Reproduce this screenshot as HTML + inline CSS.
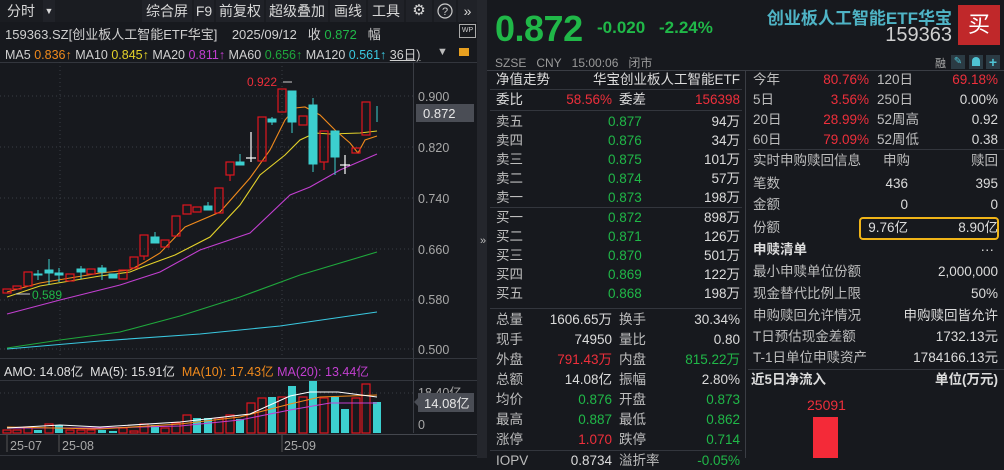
<!DOCTYPE html>
<html><head><meta charset="utf-8">
<style>
*{margin:0;padding:0;box-sizing:border-box}
body{width:1004px;height:458px;background:#17191e;overflow:hidden;position:relative;font-family:"Liberation Sans","Noto Sans CJK SC",sans-serif;color:#d6d6d6;font-size:13px}
.a{position:absolute;white-space:nowrap}
.r{color:#ee2f3b}.g{color:#20b848}.w{color:#dcdcdc}.lb{color:#bdbdbd}
.hl{position:absolute;height:1px;background:#33363d}
.row{position:absolute;height:19px;line-height:19px;font-size:13.5px}
.row span{position:absolute;white-space:nowrap}
.tb{position:absolute;top:0;height:22px;line-height:22px;font-size:14px;color:#d8d8d8;background:#202228;text-align:center}
</style></head><body>
<div class="a" style="left:0;top:0;width:477px;height:22px;background:#1a1c21"></div>
<div class="tb" style="left:0;width:42px;background:#1a1c21">分时</div>
<div class="tb" style="left:43px;width:12px;font-size:9px">▼</div>
<div class="tb" style="left:142px;width:50px">综合屏</div>
<div class="tb" style="left:194px;width:20px">F9</div>
<div class="tb" style="left:216px;width:48px">前复权</div>
<div class="tb" style="left:266px;width:62px">超级叠加</div>
<div class="tb" style="left:330px;width:36px">画线</div>
<div class="tb" style="left:368px;width:36px">工具</div>
<div class="tb" style="left:406px;width:26px;font-size:15px">⚙</div>
<div class="tb" style="left:434px;width:22px"><svg width="16" height="16" style="margin-top:3px"><circle cx="8" cy="8" r="7" fill="none" stroke="#ccc" stroke-width="1.2"/><text x="8" y="12" font-size="11" fill="#ccc" text-anchor="middle" font-family="Liberation Sans">?</text></svg></div>
<div class="tb" style="left:458px;width:19px">»</div>
<div class="a" style="left:5px;top:24px;font-size:13px;color:#d0d0d0">159363.SZ[创业板人工智能ETF华宝]&nbsp;&nbsp;&nbsp; 2025/09/12&nbsp;&nbsp; 收 <span class="g">0.872</span>&nbsp;&nbsp; 幅</div>
<div class="a" style="left:459px;top:24px;width:17px;height:14px;border:1px solid #aaa;font-size:7px;line-height:12px;text-align:center;color:#ccc">WP</div>
<div class="a" style="left:5px;top:44px;font-size:12.5px;color:#d0d0d0">MA5 <span style="color:#f08a1c">0.836↑</span> MA10 <span style="color:#e4d22a">0.845↑</span> MA20 <span style="color:#c23fd0">0.811↑</span> MA60 <span style="color:#1fa83c">0.656↑</span> MA120 <span style="color:#3ac8e0">0.561↑</span> <u>36日)</u></div>
<div class="a" style="left:437px;top:46px;color:#bbb;font-size:11px">▼</div>
<div class="a" style="left:459px;top:48px;width:10px;height:8px;background:#e8a020"></div>
<div class="hl" style="left:0;top:62px;width:477px"></div>
<svg class="a" style="left:0;top:0" width="477" height="458">
<g stroke="#3a3d44" stroke-dasharray="1,3" stroke-width="1">
<line x1="0" y1="96" x2="413" y2="96"/><line x1="0" y1="147" x2="413" y2="147"/><line x1="0" y1="198" x2="413" y2="198"/><line x1="0" y1="249" x2="413" y2="249"/><line x1="0" y1="300" x2="413" y2="300"/><line x1="0" y1="349" x2="413" y2="349"/>
<line x1="60" y1="62" x2="60" y2="356"/><line x1="282" y1="62" x2="282" y2="356"/>
<line x1="0" y1="393" x2="413" y2="393"/>
</g>
<line x1="413.5" y1="62" x2="413.5" y2="433" stroke="#3a3d44"/>
<line x1="0" y1="358.5" x2="477" y2="358.5" stroke="#33363d"/>
<line x1="0" y1="380.5" x2="477" y2="380.5" stroke="#33363d"/>
<line x1="0" y1="434.5" x2="477" y2="434.5" stroke="#44474e"/>
<line x1="0" y1="455.5" x2="477" y2="455.5" stroke="#33363d"/>
<g font-family="Liberation Sans" font-size="12.5" fill="#a8a8a8">
<text x="418" y="101">0.900</text><text x="418" y="152">0.820</text><text x="418" y="203">0.740</text><text x="418" y="254">0.660</text><text x="418" y="304">0.580</text><text x="418" y="354">0.500</text>
<text x="418" y="397">18.40亿</text><text x="418" y="429">0</text>
<text x="10" y="450">25-07</text><text x="62" y="450">25-08</text><text x="284" y="450">25-09</text>
</g>
<g stroke="#555" ><line x1="7" y1="435" x2="7" y2="452"/><line x1="59" y1="435" x2="59" y2="452"/><line x1="282" y1="435" x2="282" y2="452"/></g>
<rect x="416" y="104" width="58" height="18" fill="#4a4d55"/>
<text x="423" y="118" font-family="Liberation Sans" font-size="13" fill="#e8e8e8">0.872</text>
<rect x="418" y="393" width="56" height="19" fill="#4a4d55"/><polygon points="414,402 418,398 418,406" fill="#4a4d55"/>
<text x="424" y="408" font-family="Liberation Sans" font-size="13" fill="#e8e8e8">14.08亿</text>
<g fill="none" stroke-width="1.1">
<polyline stroke="#3ac8e0" points="7,349 100,341 200,334 280,326 377,312"/>
<polyline stroke="#1fa83c" points="7,348 60,340 120,332 180,316 240,297 300,275 377,252"/>
<polyline stroke="#c23fd0" points="7,314 60,300 120,285 160,272 200,250 250,233 290,195 310,187 340,170 377,154"/>
<polyline stroke="#e4d22a" points="7,297 40,286 100,276 130,272 145,266 175,255 210,237 240,205 260,175 285,155 300,140 315,133 330,134 360,133 377,131"/>
<polyline stroke="#f08a1c" points="7,292 40,283 100,273 130,270 145,262 160,253 185,227 220,212 250,178 270,150 285,120 295,108 305,107 320,115 335,130 350,143 358,153 365,140 377,136"/>
</g>
<g stroke="#e0161f" fill="none" stroke-width="1.2">
<rect x="3" y="289" width="8" height="4"/><rect x="13" y="286" width="8" height="3"/><rect x="24" y="272" width="8" height="14"/>
<rect x="66" y="274" width="8" height="7"/><rect x="87" y="269" width="8" height="5"/><rect x="119" y="270" width="8" height="9"/>
<rect x="130" y="257" width="8" height="11"/><rect x="140" y="235" width="8" height="21"/><rect x="161" y="240" width="8" height="7"/>
<rect x="172" y="216" width="8" height="20"/><rect x="183" y="205" width="8" height="9"/><rect x="193" y="207" width="8" height="5"/>
<rect x="215" y="188" width="8" height="25"/><rect x="226" y="162" width="8" height="13"/><rect x="258" y="117" width="8" height="44"/>
<rect x="278" y="89" width="8" height="23"/><rect x="299" y="116" width="8" height="9"/><rect x="320" y="131" width="8" height="31"/>
<rect x="352" y="148" width="8" height="5"/><rect x="362" y="102" width="8" height="33"/>
<line x1="230" y1="175" x2="230" y2="181"/><line x1="324" y1="162" x2="324" y2="170"/><line x1="144" y1="256" x2="144" y2="260"/>
</g>
<g fill="#3ccfcf" stroke="#3ccfcf" stroke-width="1">
<rect x="34" y="274" width="8" height="1"/><line x1="38" y1="270" x2="38" y2="280"/>
<rect x="45" y="270" width="8" height="3"/><line x1="49" y1="259" x2="49" y2="285"/>
<rect x="55" y="273" width="8" height="2"/><line x1="59" y1="268" x2="59" y2="282"/>
<rect x="77" y="269" width="8" height="3"/><line x1="81" y1="266" x2="81" y2="279"/>
<rect x="98" y="268" width="8" height="4"/><line x1="102" y1="265" x2="102" y2="280"/>
<rect x="109" y="274" width="8" height="4"/>
<rect x="151" y="237" width="8" height="6"/><line x1="155" y1="232" x2="155" y2="243"/>
<rect x="204" y="206" width="8" height="4"/><line x1="208" y1="202" x2="208" y2="210"/>
<rect x="236" y="162" width="8" height="3"/><line x1="240" y1="154" x2="240" y2="165"/>
<rect x="268" y="119" width="8" height="3"/><line x1="272" y1="117" x2="272" y2="125"/>
<rect x="288" y="91" width="8" height="31"/><line x1="292" y1="91" x2="292" y2="133"/>
<rect x="309" y="105" width="8" height="59"/><line x1="313" y1="98" x2="313" y2="172"/>
<rect x="331" y="131" width="8" height="26"/><line x1="335" y1="157" x2="335" y2="175"/>
<line x1="377" y1="106" x2="377" y2="122"/>
</g>
<g stroke="#fff" stroke-width="1.2"><line x1="251" y1="132" x2="251" y2="162"/><line x1="246" y1="158" x2="256" y2="158"/><line x1="345" y1="155" x2="345" y2="174"/><line x1="340" y1="165" x2="350" y2="165"/>
<line x1="283" y1="82" x2="292" y2="82" stroke="#ccc" stroke-width="1"/><line x1="16" y1="294" x2="30" y2="294" stroke="#ccc" stroke-width="1"/></g>
<text x="247" y="86" font-family="Liberation Sans" font-size="12" fill="#ee2f3b">0.922</text>
<text x="32" y="299" font-family="Liberation Sans" font-size="12" fill="#20b848">0.589</text>
<g stroke="#e0161f" fill="none" stroke-width="1.2">
<rect x="3" y="430" width="8" height="3"/><rect x="13" y="430" width="8" height="3"/><rect x="24" y="427" width="8" height="6"/>
<rect x="45" y="424" width="8" height="9"/><rect x="66" y="430" width="8" height="3"/><rect x="77" y="430" width="8" height="3"/><rect x="87" y="430" width="8" height="3"/>
<rect x="119" y="428" width="8" height="5"/><rect x="130" y="431" width="8" height="2"/><rect x="140" y="424" width="8" height="9"/><rect x="161" y="428" width="8" height="5"/>
<rect x="172" y="423" width="8" height="10"/><rect x="183" y="415" width="8" height="18"/><rect x="215" y="418" width="8" height="15"/><rect x="226" y="415" width="8" height="18"/>
<rect x="247" y="403" width="8" height="30"/><rect x="258" y="398" width="8" height="35"/><rect x="278" y="397" width="8" height="36"/>
<rect x="299" y="397" width="8" height="36"/><rect x="320" y="398" width="8" height="35"/><rect x="352" y="398" width="8" height="35"/><rect x="362" y="384" width="8" height="49"/>
</g>
<g fill="#3ccfcf">
<rect x="34" y="430" width="8" height="3"/><rect x="55" y="425" width="8" height="8"/><rect x="98" y="430" width="8" height="3"/><rect x="109" y="431" width="8" height="2"/>
<rect x="151" y="425" width="8" height="8"/><rect x="193" y="418" width="8" height="15"/><rect x="204" y="418" width="8" height="15"/><rect x="236" y="419" width="8" height="14"/>
<rect x="268" y="397" width="8" height="36"/><rect x="288" y="386" width="8" height="47"/><rect x="309" y="381" width="8" height="52"/><rect x="331" y="397" width="8" height="36"/>
<rect x="341" y="409" width="8" height="24"/><rect x="373" y="402" width="8" height="31"/>
</g>
<g fill="none" stroke-width="1.1">
<polyline stroke="#c23fd0" points="7,428 100,428 180,426 240,420 290,410 330,403 377,403"/>
<polyline stroke="#f08a1c" points="7,427 100,429 180,424 240,417 290,404 320,397 377,395"/>
<polyline stroke="#fff" points="7,428 60,425 100,427 180,422 250,414 290,396 310,392 338,392 377,397"/>
</g>
</svg>
<div class="a" style="left:4px;top:361px;font-size:12.5px;color:#e0e0e0">AMO: 14.08亿&nbsp; MA(5): 15.91亿&nbsp; <span style="color:#f08a1c">MA(10): 17.43亿</span> <span style="color:#c23fd0">MA(20): 13.44亿</span></div>
<div class="a" style="left:477px;top:0;width:10px;height:458px;background:#24262c"></div>
<div class="a" style="left:480px;top:235px;font-size:11px;color:#bbb">»</div>
<div class="a g" style="left:495px;top:8px;font-size:36px;font-weight:bold;letter-spacing:-0.5px">0.872</div>
<div class="a g" style="left:597px;top:18px;font-size:17px;font-weight:bold">-0.020</div>
<div class="a g" style="left:659px;top:18px;font-size:17px;font-weight:bold">-2.24%</div>
<div class="a" style="right:52px;top:4px;font-size:17px;font-weight:bold;color:#4fb4c6">创业板人工智能ETF华宝</div>
<div class="a" style="right:52px;top:24px;font-size:20px;color:#d0d0d0">159363</div>
<div class="a" style="left:958px;top:5px;width:42px;height:40px;background:#c0282a;color:#fff;font-size:22px;text-align:center;line-height:40px">买</div>
<div class="a" style="left:495px;top:54px;font-size:12px;color:#9a9a9a">SZSE&nbsp;&nbsp; CNY&nbsp;&nbsp; 15:00:06&nbsp;&nbsp; 闭市</div>
<div class="a" style="left:935px;top:55px;font-size:11px;color:#aaa">融</div>
<div class="a" style="left:951px;top:55px;width:14px;height:14px;background:#2b3b44;color:#4fc4d4;font-size:10px;text-align:center;line-height:14px">✎</div>
<div class="a" style="left:969px;top:55px;width:14px;height:14px;background:#2b3b44"><div style="margin:2px 3px;width:8px;height:9px;background:#4fc4d4;border-radius:4px 4px 0 0"></div></div>
<div class="a" style="left:986px;top:55px;width:14px;height:14px;background:#2b3b44;color:#4fc4d4;font-size:14px;font-weight:bold;text-align:center;line-height:14px">+</div>
<div class="hl" style="left:487px;top:70px;width:517px;background:#3a3d44"></div>
<div class="a" style="left:745px;top:70px;width:1px;height:388px;background:#3a3d44"></div>
<div class="row" style="left:496px;top:70px;width:244px"><span class="w" style="left:0">净值走势</span><span class="w" style="right:0">华宝创业板人工智能ETF</span></div>
<div class="hl" style="left:490px;top:89px;width:252px"></div>
<div class="row" style="left:496px;top:90px;width:244px"><span class="w">委比</span><span class="r" style="right:128px">58.56%</span><span class="w" style="left:123px">委差</span><span class="r" style="right:0">156398</span></div>
<div class="hl" style="left:490px;top:110px;width:252px"></div>
<div class="row" style="left:496px;top:112px;width:244px"><span class="lb">卖五</span><span class="g" style="left:112px">0.877</span><span class="w" style="right:0">94万</span></div>
<div class="row" style="left:496px;top:131px;width:244px"><span class="lb">卖四</span><span class="g" style="left:112px">0.876</span><span class="w" style="right:0">34万</span></div>
<div class="row" style="left:496px;top:150px;width:244px"><span class="lb">卖三</span><span class="g" style="left:112px">0.875</span><span class="w" style="right:0">101万</span></div>
<div class="row" style="left:496px;top:169px;width:244px"><span class="lb">卖二</span><span class="g" style="left:112px">0.874</span><span class="w" style="right:0">57万</span></div>
<div class="row" style="left:496px;top:188px;width:244px"><span class="lb">卖一</span><span class="g" style="left:112px">0.873</span><span class="w" style="right:0">198万</span></div>
<div class="hl" style="left:490px;top:207px;width:252px"></div>
<div class="row" style="left:496px;top:208px;width:244px"><span class="lb">买一</span><span class="g" style="left:112px">0.872</span><span class="w" style="right:0">898万</span></div>
<div class="row" style="left:496px;top:227px;width:244px"><span class="lb">买二</span><span class="g" style="left:112px">0.871</span><span class="w" style="right:0">126万</span></div>
<div class="row" style="left:496px;top:246px;width:244px"><span class="lb">买三</span><span class="g" style="left:112px">0.870</span><span class="w" style="right:0">501万</span></div>
<div class="row" style="left:496px;top:265px;width:244px"><span class="lb">买四</span><span class="g" style="left:112px">0.869</span><span class="w" style="right:0">122万</span></div>
<div class="row" style="left:496px;top:284px;width:244px"><span class="lb">买五</span><span class="g" style="left:112px">0.868</span><span class="w" style="right:0">198万</span></div>
<div class="hl" style="left:490px;top:308px;width:252px"></div>
<div class="row" style="left:496px;top:310px;width:244px"><span class="lb">总量</span><span class="w" style="right:128px">1606.65万</span><span class="lb" style="left:123px">换手</span><span class="w" style="right:0">30.34%</span></div>
<div class="row" style="left:496px;top:330px;width:244px"><span class="lb">现手</span><span class="w" style="right:128px">74950</span><span class="lb" style="left:123px">量比</span><span class="w" style="right:0">0.80</span></div>
<div class="row" style="left:496px;top:350px;width:244px"><span class="lb">外盘</span><span class="r" style="right:128px">791.43万</span><span class="lb" style="left:123px">内盘</span><span class="g" style="right:0">815.22万</span></div>
<div class="row" style="left:496px;top:370px;width:244px"><span class="lb">总额</span><span class="w" style="right:128px">14.08亿</span><span class="lb" style="left:123px">振幅</span><span class="w" style="right:0">2.80%</span></div>
<div class="row" style="left:496px;top:390px;width:244px"><span class="lb">均价</span><span class="g" style="right:128px">0.876</span><span class="lb" style="left:123px">开盘</span><span class="g" style="right:0">0.873</span></div>
<div class="row" style="left:496px;top:410px;width:244px"><span class="lb">最高</span><span class="g" style="right:128px">0.887</span><span class="lb" style="left:123px">最低</span><span class="g" style="right:0">0.862</span></div>
<div class="row" style="left:496px;top:430px;width:244px"><span class="lb">涨停</span><span class="r" style="right:128px">1.070</span><span class="lb" style="left:123px">跌停</span><span class="g" style="right:0">0.714</span></div>
<div class="hl" style="left:490px;top:450px;width:252px"></div>
<div class="row" style="left:496px;top:451px;width:244px"><span class="lb">IOPV</span><span class="w" style="right:128px">0.8734</span><span class="lb" style="left:123px">溢折率</span><span class="g" style="right:0">-0.05%</span></div>
<div class="row" style="left:753px;top:70px;width:245px"><span class="lb">今年</span><span class="r" style="right:129px">80.76%</span><span class="lb" style="left:124px">120日</span><span class="r" style="right:0">69.18%</span></div>
<div class="row" style="left:753px;top:90px;width:245px"><span class="lb">5日</span><span class="r" style="right:129px">3.56%</span><span class="lb" style="left:124px">250日</span><span class="w" style="right:0">0.00%</span></div>
<div class="row" style="left:753px;top:110px;width:245px"><span class="lb">20日</span><span class="r" style="right:129px">28.99%</span><span class="lb" style="left:124px">52周高</span><span class="w" style="right:0">0.92</span></div>
<div class="row" style="left:753px;top:130px;width:245px"><span class="lb">60日</span><span class="r" style="right:129px">79.09%</span><span class="lb" style="left:124px">52周低</span><span class="w" style="right:0">0.38</span></div>
<div class="hl" style="left:748px;top:149px;width:256px"></div>
<div class="row" style="left:753px;top:151px;width:245px"><span class="lb">实时申购赎回信息</span><span class="lb" style="left:130px">申购</span><span class="lb" style="right:0">赎回</span></div>
<div class="row" style="left:753px;top:174px;width:245px"><span class="lb">笔数</span><span class="w" style="right:90px">436</span><span class="w" style="right:0">395</span></div>
<div class="row" style="left:753px;top:195px;width:245px"><span class="lb">金额</span><span class="w" style="right:90px">0</span><span class="w" style="right:0">0</span></div>
<div class="row" style="left:753px;top:218px;width:245px"><span class="lb">份额</span><span class="w" style="right:90px">9.76亿</span><span class="w" style="right:0">8.90亿</span></div>
<div class="a" style="left:859px;top:217px;width:140px;height:23px;border:2px solid #f0b418;border-radius:4px"></div>
<div class="row" style="left:753px;top:240px;width:245px"><span class="w" style="font-weight:bold">申赎清单</span><span class="w" style="right:4px">···</span></div>
<div class="row" style="left:753px;top:262px;width:245px"><span class="lb">最小申赎单位份额</span><span class="w" style="right:0">2,000,000</span></div>
<div class="row" style="left:753px;top:284px;width:245px"><span class="lb">现金替代比例上限</span><span class="w" style="right:0">50%</span></div>
<div class="row" style="left:753px;top:306px;width:245px"><span class="lb">申购赎回允许情况</span><span class="w" style="right:0">申购赎回皆允许</span></div>
<div class="row" style="left:753px;top:327px;width:245px"><span class="lb">T日预估现金差额</span><span class="w" style="right:0">1732.13元</span></div>
<div class="row" style="left:753px;top:348px;width:245px"><span class="lb">T-1日单位申赎资产</span><span class="w" style="right:0">1784166.13元</span></div>
<div class="hl" style="left:748px;top:369px;width:256px"></div>
<div class="row" style="left:751px;top:370px;width:247px"><span class="w" style="font-weight:bold">近5日净流入</span><span class="w" style="right:0;font-weight:bold">单位(万元)</span></div>
<div class="a r" style="left:807px;top:397px;font-size:14px">25091</div>
<div class="a" style="left:813px;top:417px;width:25px;height:41px;background:#f42a38"></div>
</body></html>
